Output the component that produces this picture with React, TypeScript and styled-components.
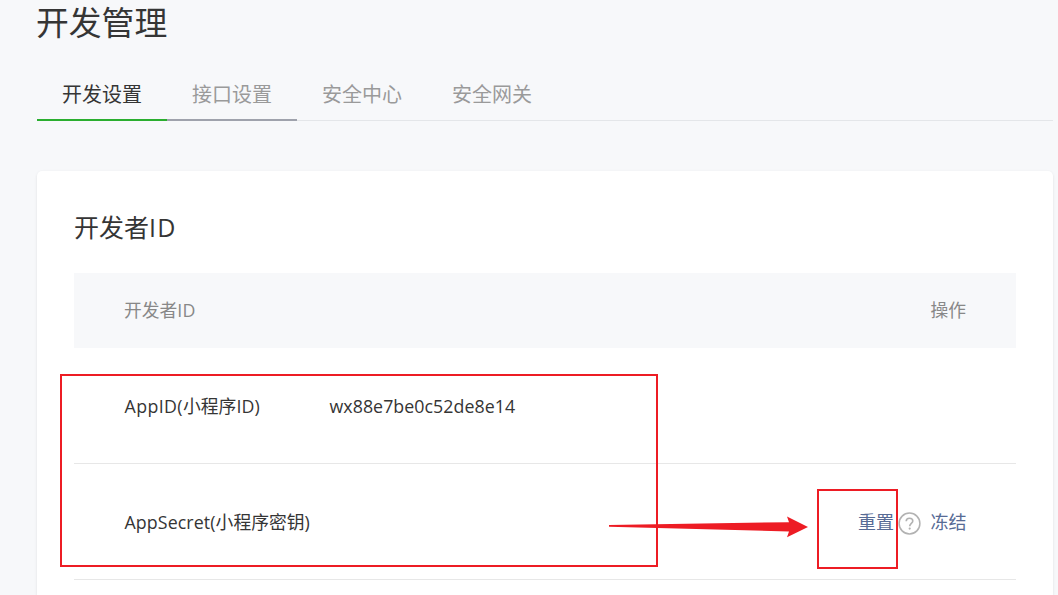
import { FunctionComponent } from "react";
import styled, { createGlobalStyle } from "styled-components";

const GlobalStyle = createGlobalStyle`
  body {
    margin: 0;
    overflow: hidden;
    background-color: #f7f8fa;
  }
`;
const Page = styled.div`
  position: relative;
  height: 595px;
  overflow: hidden;
  box-sizing: border-box;
  padding: 0 5px 0 37px;
  display: flex;
  flex-direction: column;
  font-family: "Open Sans", "Noto Sans CJK SC", sans-serif;
  font-size: 17.8px;
  color: #353535;
  white-space: nowrap;
`;
const PageTitle = styled.h1`
  margin: 0 0 0 -1px;
  height: 69px;
  line-height: 46px;
  font-size: 32.8px;
  font-weight: 400;
`;
const Tabs = styled.nav`
  display: flex;
  height: 51px;
  flex-shrink: 0;
  border-bottom: 1px solid #e4e6e9;
`;
const Tab = styled.a<{ $color: string; $line?: string }>`
  width: 130px;
  height: 52px;
  box-sizing: border-box;
  border-bottom: 2px solid ${({ $line }) => $line || "transparent"};
  line-height: 52px;
  text-align: center;
  font-size: 20px;
  color: ${({ $color }) => $color};
`;
const Card = styled.section`
  flex: 1;
  margin-top: 50px;
  padding: 36px 37px 0;
  border-radius: 5px 5px 0 0;
  background-color: #fff;
  box-shadow: 0 1px 3px rgba(0, 0, 0, 0.1);
`;
const CardTitle = styled.h2`
  margin: 0;
  height: 66px;
  line-height: 40px;
  font-size: 25px;
  font-weight: 400;
`;
const TableHead = styled.div`
  display: flex;
  align-items: center;
  justify-content: space-between;
  height: 75px;
  box-sizing: border-box;
  padding: 0 50px 3px;
  background-color: #f7f8fa;
  color: #888;
`;
const Row = styled.div`
  display: flex;
  align-items: center;
  height: 115px;
  padding: 0 49.5px 0 50.5px;
  border-bottom: 1px solid #e7e7e7;
`;
const Label = styled.div`
  width: 205px;
  padding-bottom: 2px;
`;
const Value = styled.div`
  flex: 1;
`;
const Latin = styled.span<{ $spacing: number }>`
  letter-spacing: ${({ $spacing }) => $spacing}px;
`;
const Actions = styled.div`
  display: flex;
  align-items: center;
  font-size: 18px;
`;
const ActionLink = styled.a`
  padding-bottom: 2px;
  color: #576b95;
`;
const HelpIcon = styled.svg`
  margin: 3px 9.5px 0 4px;
`;
const Highlight = styled.div<{ $x: number; $y: number; $w: number; $h: number }>`
  position: absolute;
  left: ${({ $x }) => $x}px;
  top: ${({ $y }) => $y}px;
  width: ${({ $w }) => $w}px;
  height: ${({ $h }) => $h}px;
  box-sizing: border-box;
  border: 2px solid #ed1c24;
`;
const Arrow = styled.svg`
  position: absolute;
  left: 608px;
  top: 515px;
`;

const App: FunctionComponent = () => {
  return (
    <Page>
      <GlobalStyle />
      <PageTitle>开发管理</PageTitle>
      <Tabs>
        <Tab $color="#353535" $line="#2aae2f">开发设置</Tab>
        <Tab $color="#9a9a9a" $line="#9fa2ac">接口设置</Tab>
        <Tab $color="#9a9a9a">安全中心</Tab>
        <Tab $color="#9a9a9a">安全网关</Tab>
      </Tabs>
      <Card>
        <CardTitle>
          开发者<Latin $spacing={1.2}>ID</Latin>
        </CardTitle>
        <TableHead>
          <span>
            开发者<Latin $spacing={0.2}>ID</Latin>
          </span>
          <span>操作</span>
        </TableHead>
        <Row>
          <Label>
            <Latin $spacing={0.4}>AppID(</Latin>小程序<Latin $spacing={0.1}>ID)</Latin>
          </Label>
          <Value>
            <Latin $spacing={0.05}>wx88e7be0c52de8e14</Latin>
          </Value>
        </Row>
        <Row>
          <Label>
            <Latin $spacing={0.1}>AppSecret(</Latin>小程序密钥<Latin $spacing={0}>)</Latin>
          </Label>
          <Value />
          <Actions>
            <ActionLink>重置</ActionLink>
            <HelpIcon width="23" height="23" viewBox="0 0 23 23" fill="none">
              <circle cx="11.5" cy="11.5" r="10.4" stroke="#b2b2b2" strokeWidth="1.5" />
              <path
                d="M8.2 9.3C8.2 7.3 9.6 6.2 11.5 6.2C13.4 6.2 14.8 7.4 14.8 9.1C14.8 11.3 11.7 11.6 11.7 14.2"
                stroke="#b2b2b2"
                strokeWidth="1.6"
              />
              <circle cx="11.7" cy="16.6" r="1.1" fill="#b2b2b2" />
            </HelpIcon>
            <ActionLink>冻结</ActionLink>
          </Actions>
        </Row>
      </Card>
      <Highlight $x={60} $y={374} $w={598} $h={193} />
      <Highlight $x={817} $y={489} $w={81} $h={80} />
      <Arrow width="202" height="24" viewBox="0 0 202 24">
        <path d="M1 10L181 7.2L179 1.5L200 12L179 22.3L181 16.5L1 11.8Z" fill="#ed1c24" />
      </Arrow>
    </Page>
  );
};

export default App;
